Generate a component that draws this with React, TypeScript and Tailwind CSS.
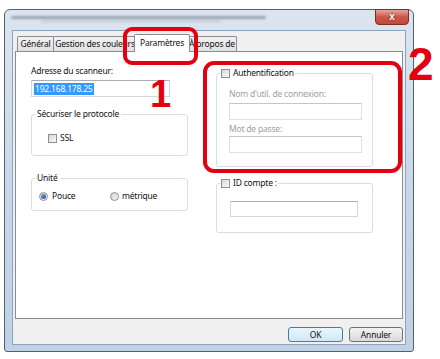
import React from "react";

const TEXT = "text-[8.5px] leading-[12px] tracking-[-0.2px]";

function Checkbox() {
  return (
    <span className="inline-block w-[9px] h-[9px] shrink-0 border border-[#8e8f8f] bg-gradient-to-br from-[#d6d6d6] to-[#fbfbfb]" />
  );
}

function Radio({ checked }: { checked?: boolean }) {
  return (
    <span className="flex w-[9px] h-[9px] shrink-0 items-center justify-center rounded-full border border-[#8e8f8f] bg-gradient-to-br from-[#cfcfcf] to-[#fbfbfb]">
      {checked && <span className="block w-[5px] h-[5px] rounded-full bg-gradient-to-br from-[#6ea4de] to-[#1c4f96]" />}
    </span>
  );
}

function TextBox({ className = "", children }: { className?: string; children?: React.ReactNode }) {
  return (
    <div className={`border border-[#d3d7de] border-t-[#abadb3] bg-white flex items-center px-[2px] ${className}`}>
      {children}
    </div>
  );
}

export default function App() {
  return (
    <div className="w-[440px] h-[359px] bg-white relative overflow-hidden pt-[9px] pl-[4px] font-['Noto_Sans','Open_Sans',sans-serif] text-[#111]">
      {/* Window */}
      <div className="w-[410px] h-[343px] border border-[#55606d] rounded-t-[6px] rounded-b-[3px] bg-gradient-to-b from-[#dbe5f0] via-[#c9d8e9] to-[#bfd1e5] flex flex-col">
        {/* Title bar */}
        <div className="h-[20px] flex items-start justify-between">
          <div className="flex flex-col gap-[1px] pt-[6px] pl-[6px]">
            <div className="h-[3px] w-[255px] rounded-full bg-[#8994a2] blur-[1.2px] opacity-80" />
            <div className="h-[2px] w-[180px] ml-[30px] rounded-full bg-[#a2acb8] blur-[1.5px] opacity-60" />
          </div>
          <div className="mr-[4px] -mt-[1px] w-[34px] h-[16px] rounded-b-[4px] border border-[#7a2f27] bg-gradient-to-b from-[#e8a49c] via-[#c9584b] to-[#c2473a] flex items-center justify-center">
            <span className="text-white text-[10px] leading-none font-bold font-['Liberation_Sans',sans-serif] [text-shadow:0_0_2px_#5a1a14]">
              x
            </span>
          </div>
        </div>

        {/* Client */}
        <div className="mx-[7px] h-[315px] border border-[#8ea2ba] bg-[#f0f0f0] flex flex-col px-[2px] pt-[5px] pb-[2px]">
          {/* Tabs */}
          <div className="flex items-end h-[15px] pl-[2px]">
            <div className="w-[37px] h-[15px] flex items-center justify-center border border-b-0 border-[#898c95] bg-gradient-to-b from-[#f2f2f2] to-[#e1e1e1] rounded-t-[2px]">
              <span className={TEXT}>Général</span>
            </div>
            <div className="-ml-[1px] w-[84px] h-[15px] flex items-center justify-center border border-b-0 border-[#898c95] bg-gradient-to-b from-[#f2f2f2] to-[#e1e1e1] rounded-t-[2px] whitespace-nowrap overflow-hidden">
              <span className={TEXT}>Gestion des couleurs</span>
            </div>
            <div className="relative z-10 -ml-[3px] w-[56px] h-[18px] -mb-[1px] flex items-start justify-center pt-[2px] border border-b-0 border-[#898c95] bg-white rounded-t-[2px]">
              <span className={TEXT}>Paramètres</span>
            </div>
            <div className="-ml-[3px] w-[50px] h-[15px] flex items-center justify-center border border-b-0 border-[#898c95] bg-gradient-to-b from-[#f2f2f2] to-[#e1e1e1] rounded-t-[2px] whitespace-nowrap">
              <span className={TEXT}>À propos de</span>
            </div>
          </div>

          {/* Panel */}
          <div className="h-[268px] border border-[#898c95] bg-white grid grid-cols-[157px_157px] gap-x-[28px] pl-[15px] items-start">
            {/* Left column */}
            <div className="flex flex-col mt-[13px]">
              <span className={TEXT}>Adresse du scanneur:</span>
              <TextBox className="mt-[3px] h-[17px] w-[139px]">
                <span className={`${TEXT} bg-[#3399ff] text-white px-[1px]`}>192.168.178.25</span>
              </TextBox>

              <fieldset className="mt-[11px] border border-[#d5dfe5] rounded-[3px]">
                <legend className={`${TEXT} ml-[3px] px-[2px]`}>Sécuriser le protocole</legend>
                <div className="mt-[12px] mb-[11px] ml-[16px] flex items-center gap-[3px] h-[12px]">
                  <Checkbox />
                  <span className={TEXT}>SSL</span>
                </div>
              </fieldset>

              <fieldset className="mt-[16px] border border-[#d5dfe5] rounded-[3px]">
                <legend className={`${TEXT} ml-[3px] px-[2px]`}>Unité</legend>
                <div className="mt-[6px] mb-[8px] ml-[7px] flex items-center h-[12px]">
                  <div className="w-[71px] flex items-center gap-[4px]">
                    <Radio checked />
                    <span className={TEXT}>Pouce</span>
                  </div>
                  <div className="flex items-center gap-[3px]">
                    <Radio />
                    <span className={TEXT}>métrique</span>
                  </div>
                </div>
              </fieldset>
            </div>

            {/* Right column */}
            <div className="flex flex-col mt-[15px]">
              <fieldset className="border border-[#d5dfe5] rounded-[3px]">
                <legend className={`${TEXT} ml-[3px] px-[1px] flex items-center gap-[3px]`}>
                  <Checkbox />
                  <span>Authentification</span>
                </legend>
                <div className="flex flex-col pl-[12px] pb-[13px]">
                  <div className={`${TEXT} mt-[9px] text-[#a0a0a0]`}>Nom d'util. de connexion:</div>
                  <TextBox className="mt-[3px] h-[17px] w-[133px] border-[#dcdfe4] border-t-[#c4c6cb]" />
                  <div className={`${TEXT} mt-[3px] text-[#a0a0a0]`}>Mot de passe:</div>
                  <TextBox className="mt-[1px] h-[17px] w-[133px] border-[#dcdfe4] border-t-[#c4c6cb]" />
                </div>
              </fieldset>

              <fieldset className="mt-[10px] border border-[#d5dfe5] rounded-[3px]">
                <legend className={`${TEXT} ml-[3px] px-[1px] flex items-center gap-[3px]`}>
                  <Checkbox />
                  <span>ID compte :</span>
                </legend>
                <div className="pl-[13px] pb-[15px]">
                  <TextBox className="mt-[12px] h-[16px] w-[128px]" />
                </div>
              </fieldset>
            </div>
          </div>

          {/* Buttons */}
          <div className="mt-[8px] flex justify-end gap-[6px]">
            <button className={`${TEXT} w-[55px] h-[15px] rounded-[3px] border border-[#3c7fb1] bg-gradient-to-b from-[#eaf6fd] to-[#cfe7f5] flex items-center justify-center`}>
              OK
            </button>
            <button className={`${TEXT} w-[54px] h-[15px] rounded-[3px] border border-[#707070] bg-gradient-to-b from-[#f2f2f2] to-[#dadada] flex items-center justify-center`}>
              Annuler
            </button>
          </div>
        </div>
      </div>

      {/* Annotations */}
      <div className="absolute left-[123px] top-[27px] w-[75px] h-[38px] border-[4px] border-[#e3000f] rounded-[9px]" />
      <div className="absolute left-[203px] top-[61px] w-[199px] h-[112px] border-[4px] border-[#e3000f] rounded-[11px]" />
      <span className="absolute left-[150px] top-[75px] text-[38px] leading-none font-bold text-[#e3000f] font-['Liberation_Sans',sans-serif]">
        1
      </span>
      <span className="absolute left-[408px] top-[41px] text-[46px] leading-none font-bold text-[#e3000f] font-['Liberation_Sans',sans-serif]">
        2
      </span>
    </div>
  );
}
